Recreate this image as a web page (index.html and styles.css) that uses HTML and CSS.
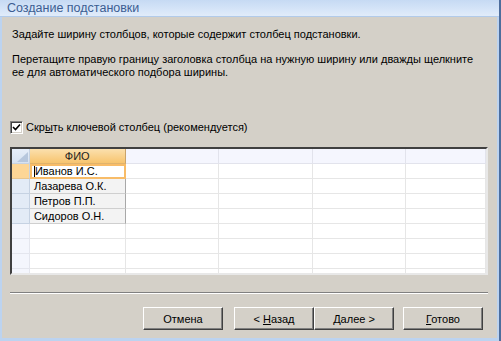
FILE: index.html
```html
<!DOCTYPE html>
<html>

<head>
    <title>Создание подстановки</title>
    <link rel="stylesheet" href="styles.css">
</head>

<body>
<div class="window">
    <div class="titlebar">Создание подстановки</div>

    <div class="content">
        <p class="line first">Задайте ширину столбцов, которые содержит столбец подстановки.</p>
        <p class="line second">Перетащите правую границу заголовка столбца на нужную ширину или дважды щелкните<br>ее для автоматического подбора ширины.</p>

        <label class="check">
            <span class="box">
                <svg width="9" height="9" viewBox="0 0 9 9"><path d="M1 4 L3.5 6.5 L8 1.5" fill="none" stroke="#000" stroke-width="1.6"/></svg>
            </span>
            Скр<u>ы</u>ть ключевой столбец (рекомендуется)
        </label>

        <div class="grid">
            <div class="row head">
                <div class="sel corner">
                    <svg width="15" height="12" viewBox="0 0 15 12"><polygon points="14,1 14,11 3,11" fill="#b7c7dd"/></svg>
                </div>
                <div class="cell fio">ФИО</div>
                <div class="cell"></div>
                <div class="cell"></div>
                <div class="cell"></div>
                <div class="cell last"></div>
            </div>
            <div class="row">
                <div class="sel current"></div>
                <div class="cell fio active"><span class="caret"></span>Иванов И.С.</div>
                <div class="cell"></div>
                <div class="cell"></div>
                <div class="cell"></div>
                <div class="cell last"></div>
            </div>
            <div class="row">
                <div class="sel"></div>
                <div class="cell fio">Лазарева О.К.</div>
                <div class="cell"></div>
                <div class="cell"></div>
                <div class="cell"></div>
                <div class="cell last"></div>
            </div>
            <div class="row">
                <div class="sel"></div>
                <div class="cell fio">Петров П.П.</div>
                <div class="cell"></div>
                <div class="cell"></div>
                <div class="cell"></div>
                <div class="cell last"></div>
            </div>
            <div class="row">
                <div class="sel"></div>
                <div class="cell fio">Сидоров О.Н.</div>
                <div class="cell"></div>
                <div class="cell"></div>
                <div class="cell"></div>
                <div class="cell last"></div>
            </div>
            <div class="row empty">
                <div class="sel"></div>
                <div class="cell fio"></div>
                <div class="cell"></div>
                <div class="cell"></div>
                <div class="cell"></div>
                <div class="cell last"></div>
            </div>
            <div class="row empty">
                <div class="sel"></div>
                <div class="cell fio"></div>
                <div class="cell"></div>
                <div class="cell"></div>
                <div class="cell"></div>
                <div class="cell last"></div>
            </div>
            <div class="row empty">
                <div class="sel"></div>
                <div class="cell fio"></div>
                <div class="cell"></div>
                <div class="cell"></div>
                <div class="cell"></div>
                <div class="cell last"></div>
            </div>
            <div class="row empty">
                <div class="sel"></div>
                <div class="cell fio"></div>
                <div class="cell"></div>
                <div class="cell"></div>
                <div class="cell"></div>
                <div class="cell last"></div>
            </div>
        </div>

        <div class="separator"></div>

        <div class="buttons">
            <button class="btn">Отмена</button>
            <div class="pair">
                <button class="btn">&lt; <u>Н</u>азад</button>
                <button class="btn"><u>Д</u>алее &gt;</button>
            </div>
            <button class="btn"><u>Г</u>отово</button>
        </div>
    </div>
</div>
</body>
</html>
```

FILE: styles.css
```css
* {
    box-sizing: border-box;
}
body, html {
    padding: 0;
    margin: 0;
}
body {
    width: 501px;
    height: 341px;
    overflow: hidden;
    font-family: "Liberation Sans", Arial, sans-serif;
    font-size: 11px;
    color: #000;
}
.window {
    width: 501px;
    height: 341px;
    display: flex;
    flex-direction: column;
    background-color: #bcd3f0;
    border-right: 2px solid #4d6d9c;
}
.titlebar {
    height: 17px;
    padding: 1px 0 0 7px;
    font-size: 12.5px;
    color: #3c5d92;
    background: linear-gradient(#c6daf3, #d6e5f8 60%, #e1ecfa);
    border-bottom: 1px solid #b2cbea;
}
.content {
    flex: 1;
    display: flex;
    flex-direction: column;
    margin: 0 2px 3px 2px;
    padding: 11px 9px 0 8px;
    background-color: #d4d0c8;
}
.line {
    margin: 0;
    padding-left: 2px;
    line-height: 13px;
}
.second {
    margin-top: 12px;
}
.check {
    display: flex;
    align-items: center;
    margin-top: 41px;
    height: 14px;
}
.check u {
    text-decoration: underline;
}
.box {
    width: 13px;
    height: 13px;
    margin-right: 3px;
    display: flex;
    align-items: center;
    justify-content: center;
    background-color: #fff;
    border-top: 1px solid #808080;
    border-left: 1px solid #808080;
    border-bottom: 1px solid #fff;
    border-right: 1px solid #fff;
    box-shadow: inset 1px 1px 0 #404040, inset -1px -1px 0 #d4d0c8;
}
.grid {
    margin-top: 13px;
    height: 128px;
    overflow: hidden;
    background-color: #fff;
    border-top: 2px solid #404040;
    border-left: 2px solid #404040;
    border-bottom: 2px solid #e8e8e8;
    border-right: 2px solid #e8e8e8;
}
.row {
    display: flex;
    height: 15px;
}
.sel {
    width: 18px;
    height: 15px;
    background-color: #e3ebf6;
    border-right: 1px solid #c6d2e2;
    border-bottom: 1px solid #c6d2e2;
}
.corner {
    display: flex;
    align-items: flex-end;
    justify-content: flex-end;
    background: linear-gradient(#e6eef9, #d7e2f1);
}
.sel.current {
    background-color: #fdd696;
    border-bottom: 1px solid #e7c58e;
}
.empty .sel {
    background-color: #f4f6fd;
    border-right: 1px solid #e4e6ee;
    border-bottom: 1px solid #e4e6ee;
}
.cell {
    width: 94px;
    height: 15px;
    line-height: 14px;
    padding-left: 4px;
    white-space: nowrap;
    border-right: 1px solid #e6e6e6;
    border-bottom: 1px solid #e6e6e6;
}
.cell.fio {
    width: 96px;
    background-color: #f3f3f3;
    border-right: 1px solid #a8a8a8;
    border-bottom: 1px solid #cfcfcf;
}
.cell.last {
    width: 80px;
}
.head .cell {
    background-color: #f5f6fe;
    border-right: 1px solid #e2e3ec;
    border-bottom: 1px solid #e2e3ec;
}
.head .cell.fio {
    text-align: center;
    padding-left: 0;
    color: #1e1e1e;
    background: linear-gradient(#fbe0ae, #f7c46e);
    border-right: 1px solid #c9a36a;
    border-bottom: 1px solid #e0b36c;
}
.cell.active {
    background-color: #fff;
    border: 2px solid #f8bc68;
    padding-left: 2px;
    line-height: 11px;
}
.caret {
    display: inline-block;
    width: 1px;
    height: 11px;
    background-color: #000;
    vertical-align: top;
}
.empty .cell.fio {
    background-color: #fff;
    border-right: 1px solid #e6e6e6;
    border-bottom: 1px solid #e6e6e6;
}
.separator {
    margin-top: 17px;
    height: 2px;
    border-top: 1px solid #808080;
    border-bottom: 1px solid #fff;
}
.buttons {
    display: flex;
    margin-top: 13px;
    padding-left: 133px;
}
.pair {
    display: flex;
    margin: 0 9px 0 11px;
}
.btn {
    width: 80px;
    height: 23px;
    padding: 0;
    font-family: "Liberation Sans", Arial, sans-serif;
    font-size: 11px;
    color: #000;
    background-color: #d4d0c8;
    border-top: 1px solid #fff;
    border-left: 1px solid #fff;
    border-bottom: 1px solid #404040;
    border-right: 1px solid #404040;
    box-shadow: inset -1px -1px 0 #808080;
}
```
